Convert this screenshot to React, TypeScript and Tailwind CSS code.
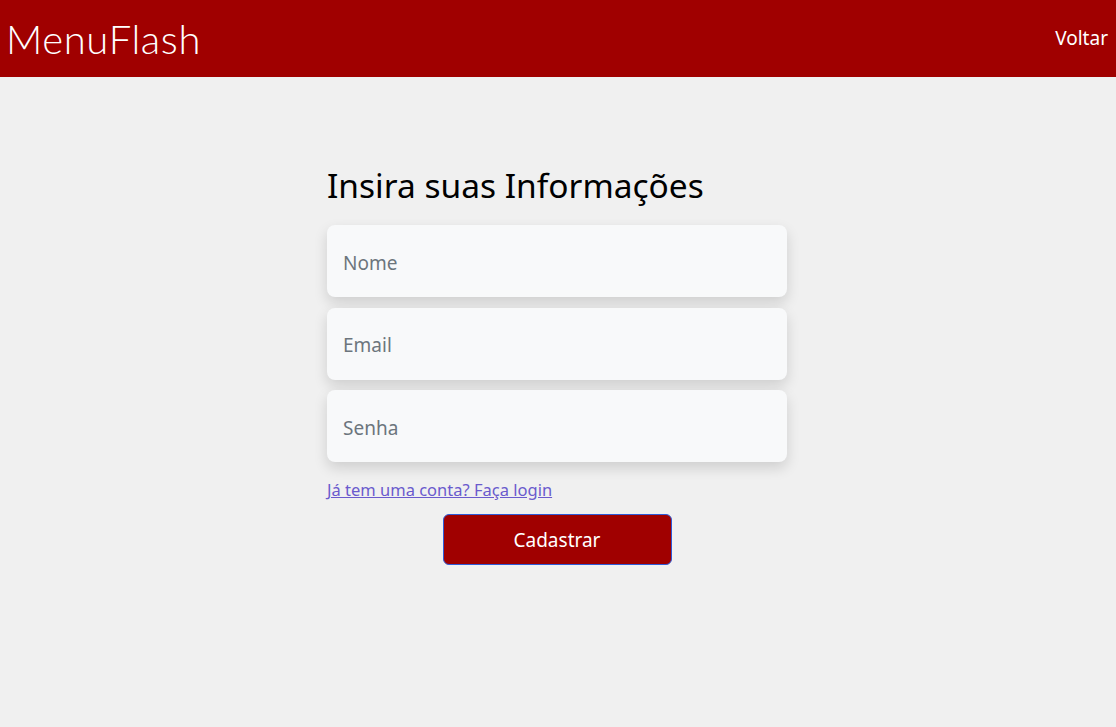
export default function App() {
  return (
    <div className="min-h-[727px] bg-[#f0f0f0] font-['Noto_Sans','Open_Sans',sans-serif]">
      <header className="flex h-[77px] items-center justify-between bg-[#a00000] pl-[6px] pr-[8px]">
        <span className="font-['Lato',sans-serif] text-[40px] font-light leading-none tracking-[0.6px] text-white">
          MenuFlash
        </span>
        <a href="#" className="text-[19px] text-white">
          Voltar
        </a>
      </header>

      <main className="flex justify-center pr-[2px] pt-[85px]">
        <form className="flex w-[460px] flex-col">
          <h1 className="mb-[17px] text-[33.5px] leading-[46px] text-black">Insira suas Informações</h1>
          <div className="flex flex-col gap-[10.5px]">
            {["Nome", "Email", "Senha"].map((p) => (
              <input
                key={p}
                type={p === "Senha" ? "password" : "text"}
                placeholder={p}
                className="h-[72px] rounded-[8px] bg-[#f8f9fa] px-[16px] pt-[3px] text-[19px] text-gray-800 shadow-[0_6px_14px_rgba(0,0,0,0.14)] outline-none placeholder:text-[#6c757d]"
              />
            ))}
          </div>
          <a href="#" className="mt-[16px] self-start text-[16.5px] leading-[24px] text-[#6a5acd] underline">
            Já tem uma conta? Faça login
          </a>
          <button
            type="button"
            className="mx-auto mt-[12px] h-[51px] w-[229px] rounded-[6px] border border-[#2f5bd8] bg-[#a00000] pt-[2px] text-[19px] text-white"
          >
            Cadastrar
          </button>
        </form>
      </main>
    </div>
  );
}
